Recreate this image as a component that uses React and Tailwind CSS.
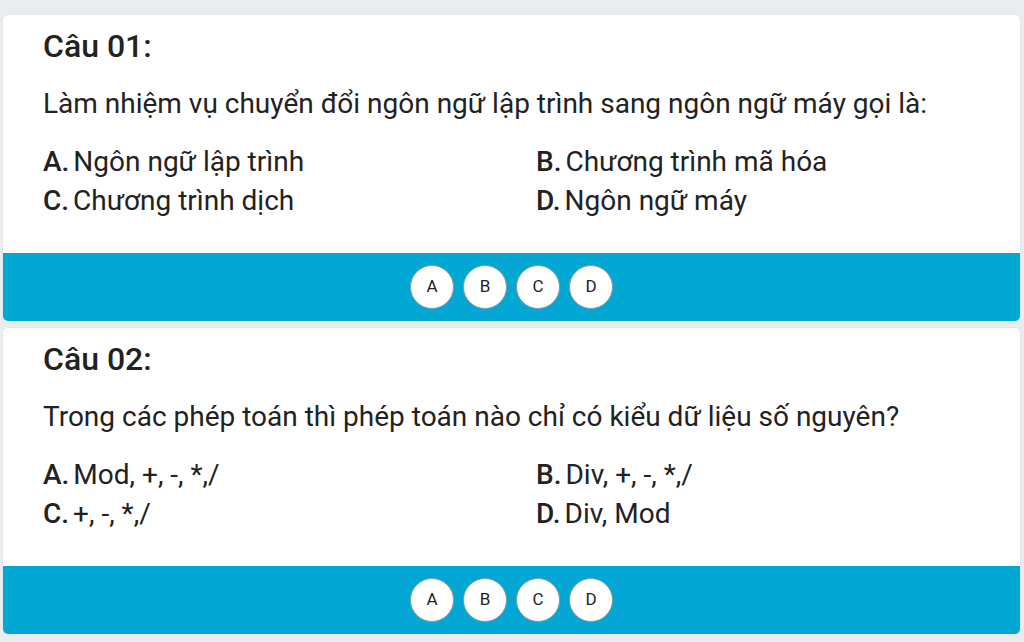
const questions = [
  {
    no: "01",
    text: "Làm nhiệm vụ chuyển đổi ngôn ngữ lập trình sang ngôn ngữ máy gọi là:",
    options: [
      ["A", "Ngôn ngữ lập trình"],
      ["B", "Chương trình mã hóa"],
      ["C", "Chương trình dịch"],
      ["D", "Ngôn ngữ máy"],
    ],
  },
  {
    no: "02",
    text: "Trong các phép toán thì phép toán nào chỉ có kiểu dữ liệu số nguyên?",
    options: [
      ["A", "Mod, +, -, *,/"],
      ["B", "Div, +, -, *,/"],
      ["C", "+, -, *,/"],
      ["D", "Div, Mod"],
    ],
  },
];

function QuestionCard({ q }) {
  return (
    <div className="ml-[2px] mr-[3px] rounded-md overflow-hidden border border-[#e3e6ea] bg-white">
      <div className="pl-[40px] pr-4 pt-[12px] pb-[33px] text-[#222]">
        <div className="text-[32px] leading-[38px] font-medium">Câu {q.no}:</div>
        <div className="mt-[23px] text-[28px] leading-[32px]">{q.text}</div>
        <div className="mt-[22px] grid grid-cols-[493px_1fr] text-[28px] leading-[39px]">
          {q.options.map(([k, v]) => (
            <div key={k} className="whitespace-nowrap">
              <span className="font-medium">{k}.</span>
              <span className="ml-[4px]">{v}</span>
            </div>
          ))}
        </div>
      </div>
      <div className="h-[68px] bg-[#02a7d3] flex items-center justify-center gap-[9px]">
        {["A", "B", "C", "D"].map((k) => (
          <button
            key={k}
            className="w-[44px] h-[44px] rounded-full bg-white border border-[#8a9aa3] text-[17px] text-[#222] flex items-center justify-center"
          >
            {k}
          </button>
        ))}
      </div>
    </div>
  );
}

export default function App() {
  return (
    <div
      className="w-[1024px] h-[642px] overflow-hidden bg-[#eaedf0] pt-[14px] flex flex-col gap-[5px]"
      style={{ fontFamily: "Roboto, 'Noto Sans', sans-serif" }}
    >
      {questions.map((q) => (
        <QuestionCard key={q.no} q={q} />
      ))}
    </div>
  );
}
